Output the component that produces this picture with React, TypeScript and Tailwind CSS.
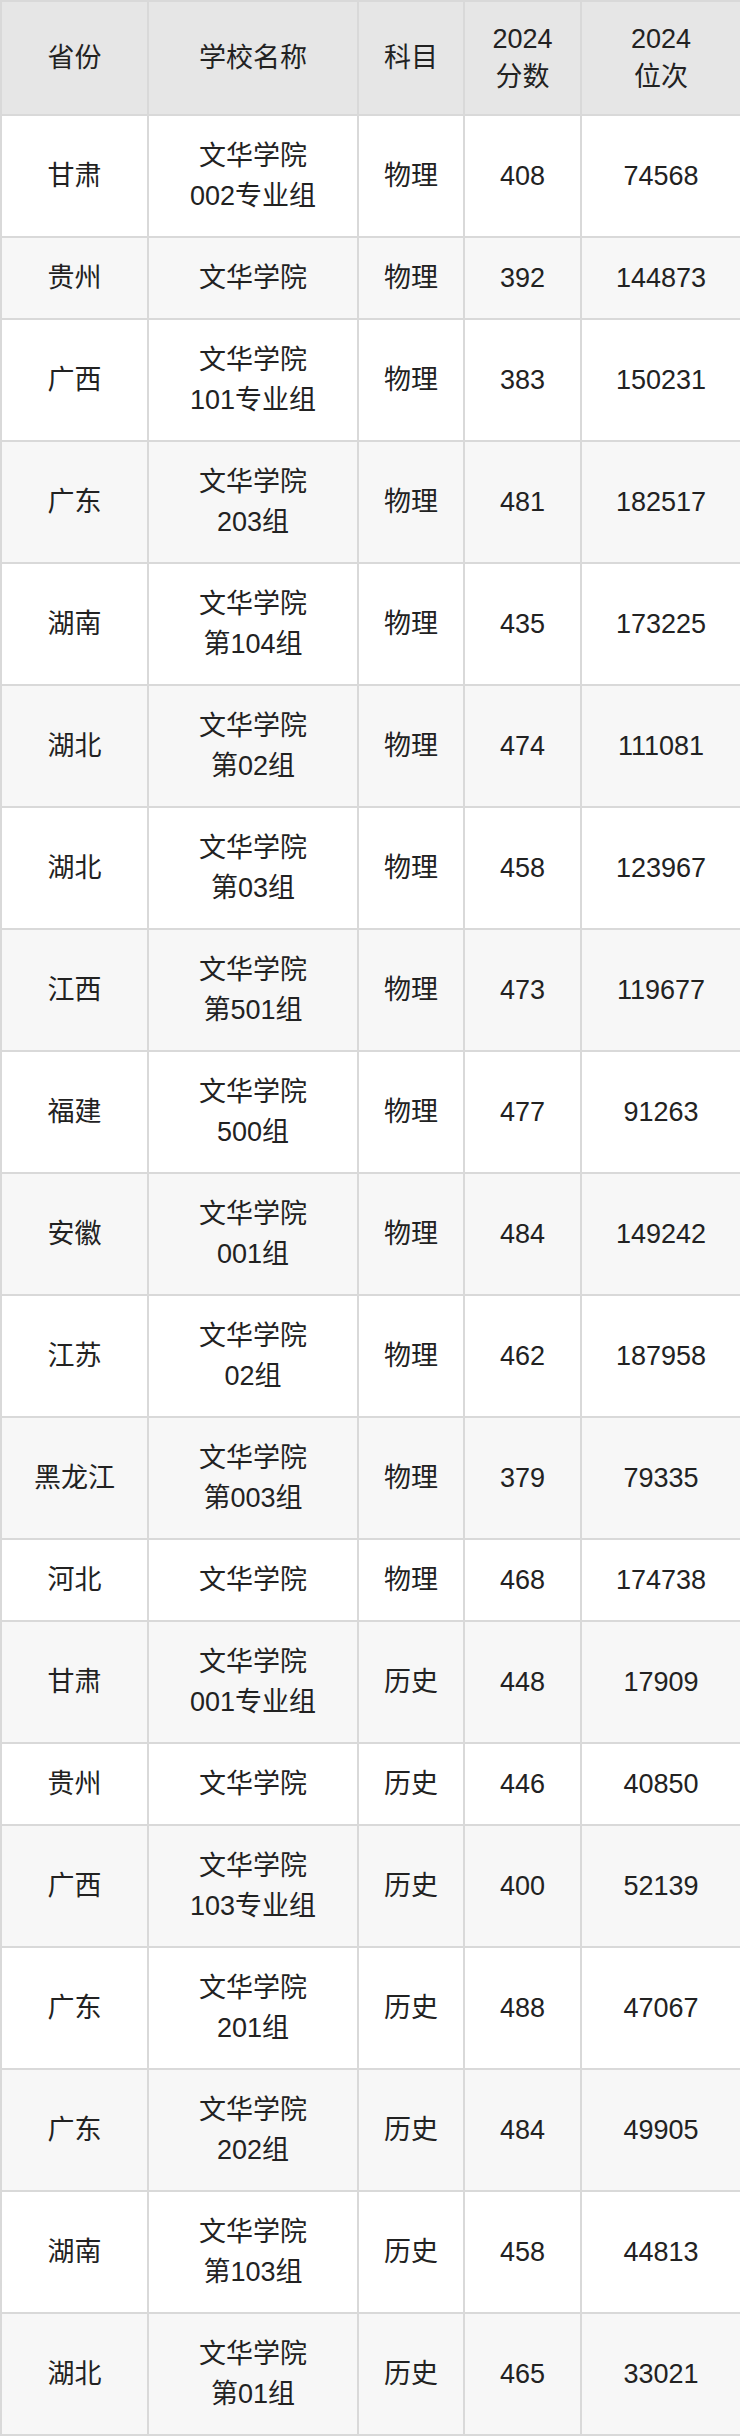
const rows: [string, string[], string, string, string][] = [
  ["甘肃", ["文华学院", "002专业组"], "物理", "408", "74568"],
  ["贵州", ["文华学院"], "物理", "392", "144873"],
  ["广西", ["文华学院", "101专业组"], "物理", "383", "150231"],
  ["广东", ["文华学院", "203组"], "物理", "481", "182517"],
  ["湖南", ["文华学院", "第104组"], "物理", "435", "173225"],
  ["湖北", ["文华学院", "第02组"], "物理", "474", "111081"],
  ["湖北", ["文华学院", "第03组"], "物理", "458", "123967"],
  ["江西", ["文华学院", "第501组"], "物理", "473", "119677"],
  ["福建", ["文华学院", "500组"], "物理", "477", "91263"],
  ["安徽", ["文华学院", "001组"], "物理", "484", "149242"],
  ["江苏", ["文华学院", "02组"], "物理", "462", "187958"],
  ["黑龙江", ["文华学院", "第003组"], "物理", "379", "79335"],
  ["河北", ["文华学院"], "物理", "468", "174738"],
  ["甘肃", ["文华学院", "001专业组"], "历史", "448", "17909"],
  ["贵州", ["文华学院"], "历史", "446", "40850"],
  ["广西", ["文华学院", "103专业组"], "历史", "400", "52139"],
  ["广东", ["文华学院", "201组"], "历史", "488", "47067"],
  ["广东", ["文华学院", "202组"], "历史", "484", "49905"],
  ["湖南", ["文华学院", "第103组"], "历史", "458", "44813"],
  ["湖北", ["文华学院", "第01组"], "历史", "465", "33021"],
];

const th = "border-2 border-[#d9d9d9] px-1 py-[18px] font-normal leading-[38px]";
const td = "border-2 border-[#d9d9d9] px-1 py-5 leading-[40px]";

export default function App() {
  return (
    <div className="w-[740px] bg-white text-[#222] font-['Liberation_Sans','Noto_Sans_CJK_SC',sans-serif] text-[27px]">
      <table className="w-full table-fixed border-collapse text-center">
        <colgroup>
          <col className="w-[147px]" />
          <col className="w-[210px]" />
          <col className="w-[106px]" />
          <col className="w-[117px]" />
          <col className="w-[160px]" />
        </colgroup>
        <thead>
          <tr className="bg-[#e6e6e6]">
            <th className={th}>省份</th>
            <th className={th}>学校名称</th>
            <th className={th}>科目</th>
            <th className={th}>
              2024
              <br />
              分数
            </th>
            <th className={th}>
              2024
              <br />
              位次
            </th>
          </tr>
        </thead>
        <tbody>
          {rows.map((r, i) => (
            <tr key={i} className={i % 2 === 1 ? "bg-[#f7f7f7]" : "bg-white"}>
              <td className={td}>{r[0]}</td>
              <td className={td}>
                {r[1].map((line, j) => (
                  <div key={j}>{line}</div>
                ))}
              </td>
              <td className={td}>{r[2]}</td>
              <td className={td}>{r[3]}</td>
              <td className={td}>{r[4]}</td>
            </tr>
          ))}
        </tbody>
      </table>
    </div>
  );
}
